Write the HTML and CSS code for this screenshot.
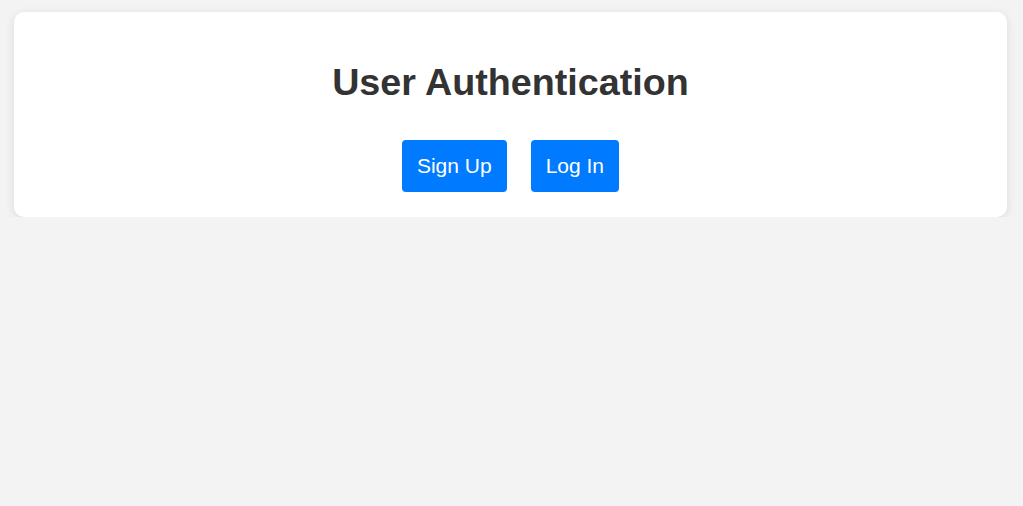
FILE: index.html
```html
<!DOCTYPE html>
<html lang="en">
<head>
<meta charset="utf-8">
<title>User Authentication</title>
<link rel="stylesheet" href="styles.css">
</head>
<body>
<div class="card">
  <h1 class="title">User Authentication</h1>
  <div class="actions">
    <button class="btn">Sign Up</button>
    <button class="btn">Log In</button>
  </div>
</div>
</body>
</html>
```
FILE: styles.css
```css
html, body {
  margin: 0;
  padding: 0;
}
body {
  background: #f3f3f3;
  font-family: "Liberation Sans", Arial, Helvetica, sans-serif;
  padding: 12px 16px 0 14px;
}
.card {
  background: #ffffff;
  border-radius: 10px;
  box-shadow: 0 2px 10px rgba(0, 0, 0, 0.1);
  padding: 20px 20px 25px;
  text-align: center;
}
.title {
  margin: 30px 0 37px;
  font-size: 37.7px;
  font-weight: bold;
  color: #333333;
  line-height: 41px;
}
.actions {
  display: flex;
  justify-content: center;
  gap: 24px;
}
.btn {
  background: #007bff;
  color: #ffffff;
  border: none;
  border-radius: 4px;
  font-family: "Liberation Sans", Arial, Helvetica, sans-serif;
  font-size: 21px;
  line-height: 24px;
  padding: 14px 15px;
  cursor: pointer;
}
```
